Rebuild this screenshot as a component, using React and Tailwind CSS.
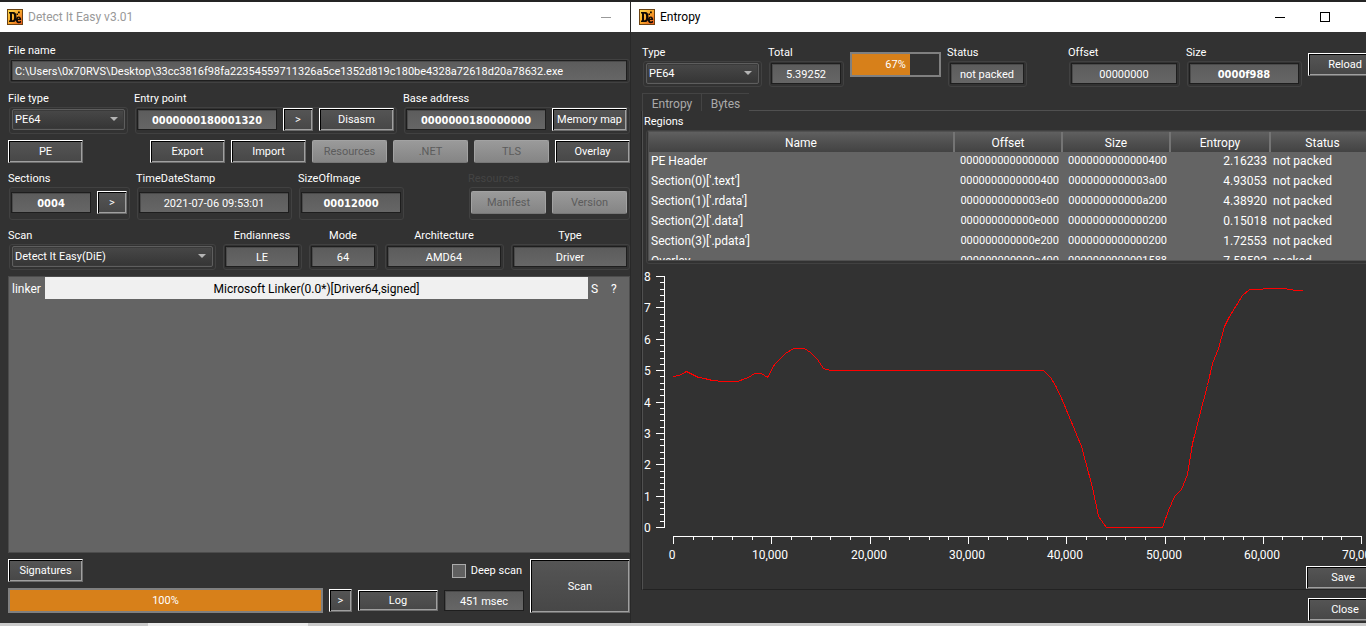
import React from "react";

const cx = (...parts) => parts.filter(Boolean).join(" ");

function Logo() {
  return (
    <svg width="16" height="16" viewBox="0 0 16 16" aria-hidden="true" className="shrink-0">
      <defs>
        <linearGradient id="logo-fill" x1="0" y1="0" x2="1" y2="1">
          <stop offset="0" stopColor="#fbd84a" />
          <stop offset="0.5" stopColor="#f7a72b" />
          <stop offset="1" stopColor="#e8561c" />
        </linearGradient>
      </defs>
      <rect width="16" height="16" fill="#6b4313" />
      <rect x="1" y="1" width="14" height="14" fill="url(#logo-fill)" />
      <path d="M2 3h4.200c2.200 0 3.300 1.700 3.300 5s-1.100 5-3.300 5H2v-1.500h1V4.500H2zM5 4.800v6.400h.8c.9 0 1.300-1 1.300-3.200s-.4-3.200-1.300-3.200z" fill="#100a04" fillRule="evenodd" />
      <path d="M14.200 11H10.900c0 1 .4 1.500 1.200 1.500.6 0 1-.2 1.900-.7v1.700c-.7.500-1.400.7-2.200.7-1.900 0-2.900-1.200-2.900-3.200 0-2.100 1-3.400 2.800-3.400 1.700 0 2.500 1.200 2.500 3.400zm-1.900-1.200c0-.7-.2-1.100-.7-1.100s-.8.400-.8 1.100z" fill="#100a04" />
      <path d="M9.500 4.500H11V6H9.500zM11 2.500h1.800v1.800H11z" fill="#100a04" />
    </svg>
  );
}

function Button({ children, className, disabled }) {
  return (
    <button
      type="button"
      disabled={disabled}
      className={cx(
        "flex shrink-0 items-center justify-center whitespace-nowrap border pt-0.5",
        disabled
          ? "rounded-xs border-[#a2a2a2] border-b-[#777777] bg-linear-to-b from-[#9a9a9a] to-[#858585] text-[#5c5c5c]"
          : "border-t-white border-l-white border-r-[#6c6c6c] border-b-[#6c6c6c] bg-linear-to-b from-[#555555] to-[#474747] text-white shadow-[inset_1px_1px_0_#000,inset_-1px_-1px_0_#a0a0a0]",
        className
      )}
    >
      {children}
    </button>
  );
}

function Value({ id, value, bold, className, label, left }) {
  return (
    <input
      id={id}
      aria-label={label}
      readOnly
      defaultValue={value}
      className={cx(
        "h-[21px] min-w-0 border border-[#1e1e1e] bg-linear-to-b from-[#5c5c5c] to-[#666666] pt-0.5 text-white shadow-[inset_1px_1px_0_#4a4a4a] outline-none",
        left ? "px-[3px]" : "text-center",
        bold && "font-['DejaVu_Sans_Condensed',sans-serif] font-bold",
        className
      )}
    />
  );
}

function Combo({ id, value }) {
  return (
    <div className="relative ml-px h-[21px] flex-1">
      <select
        id={id}
        defaultValue={value}
        className="h-full w-full appearance-none rounded-xs border border-[#5e5e5e] bg-linear-to-b from-[#484848] to-[#353535] pl-[2px] pt-0.5 text-white shadow-[inset_0_0_0_1px_#3a3a3a] outline-none"
      >
        <option>{value}</option>
      </select>
      <svg width="8" height="4" viewBox="0 0 8 4" className="pointer-events-none absolute right-[7px] top-2" aria-hidden="true">
        <path d="M0 0h8L4 4z" fill="#b4b4b4" />
      </svg>
    </div>
  );
}

function Group({ label, htmlFor, className, frame = "h-[26px]", row = "h-[23px]", center, muted, children }) {
  return (
    <div className={cx("flex min-w-0 flex-col gap-0.5", className)}>
      <label
        htmlFor={htmlFor}
        className={cx("h-3.5 whitespace-nowrap leading-4", center && "text-center", muted ? "text-[#444444]" : "text-white")}
      >
        {label}
      </label>
      <div className={cx("ml-px rounded-[3px] border border-[#414141] pl-px pr-0.5", frame)}>
        <div className={cx("flex items-center gap-1.5", row)}>{children}</div>
      </div>
    </div>
  );
}

function Progress({ value, className, fill }) {
  return (
    <div
      role="progressbar"
      aria-valuenow={value}
      aria-label="Progress"
      className={cx("relative flex h-[25px] items-center justify-center border-2 border-[#808080] text-white", className)}
    >
      <div className={cx("absolute inset-y-0 left-0 bg-[#d7801a]", fill)} />
      <span className="relative pt-0.5">{value}%</span>
    </div>
  );
}

function MainWindow() {
  return (
    <section className="flex min-w-0 flex-col border-r border-[#282828]">
      <header className="flex h-[30px] shrink-0 items-center gap-[5px] bg-white pl-[7px] pr-[19px] text-[12px] text-[#999999]">
        <Logo />
        <h1 className="flex-1">Detect It Easy v3.01</h1>
        <button type="button" aria-label="Minimize" className="flex h-6 items-center">
          <span className="block h-px w-2.5 bg-[#999999]" />
        </button>
      </header>
      <main className="flex flex-1 flex-col pb-2.5 pl-2 pt-[11px]">
        <Group label="File name" htmlFor="file-name" frame="h-6" row="h-[21px]">
          <Value id="file-name" left className="flex-1" value="C:\Users\0x70RVS\Desktop\33cc3816f98fa22354559711326a5ce1352d819c180be4328a72618d20a78632.exe" />
        </Group>
        <div className="mt-2 flex gap-1.5">
          <Group label="File type" htmlFor="file-type" className="w-[120px] shrink-0" frame="h-[27px]">
            <Combo id="file-type" value="PE64" />
          </Group>
          <Group label="Entry point" htmlFor="entry-point" className="flex-1" frame="h-[27px]">
            <Value id="entry-point" bold className="flex-1" value="0000000180001320" />
            <Button className="h-[23px] w-[30px]">&gt;</Button>
            <Button className="h-[23px] w-[75px]">Disasm</Button>
          </Group>
          <Group label="Base address" htmlFor="base-address" className="w-[227px] shrink-0" frame="h-[27px]">
            <Value id="base-address" bold className="flex-1" value="0000000180000000" />
            <Button className="h-[23px] w-[75px]">Memory map</Button>
          </Group>
        </div>
        <div className="mt-1.5 flex gap-1.5">
          <Button className="mr-auto h-[23px] w-[75px]">PE</Button>
          <Button className="h-[23px] w-[75px]">Export</Button>
          <Button className="h-[23px] w-[75px]">Import</Button>
          <Button disabled className="h-[23px] w-[75px]">Resources</Button>
          <Button disabled className="h-[23px] w-[75px]">.NET</Button>
          <Button disabled className="h-[23px] w-[75px]">TLS</Button>
          <Button className="h-[23px] w-[75px]">Overlay</Button>
        </div>
        <div className="mt-2 flex gap-1.5">
          <Group label="Sections" htmlFor="sections" className="w-[122px]" frame="h-[33px] pt-[3px]">
            <Value id="sections" bold className="flex-1" value="0004" />
            <Button className="h-[23px] w-[30px]">&gt;</Button>
          </Group>
          <Group label="TimeDateStamp" htmlFor="timestamp" className="w-[156px]" frame="h-[33px] pt-[3px]">
            <Value id="timestamp" className="flex-1" value="2021-07-06 09:53:01" />
          </Group>
          <Group label="SizeOfImage" htmlFor="image-size" className="w-[106px]" frame="h-[33px] pt-[3px]">
            <Value id="image-size" bold className="flex-1" value="00012000" />
          </Group>
          <Group label="Resources" muted className="ml-auto w-[162px]" frame="h-[33px] pt-[3px]">
            <Button disabled className="h-[23px] w-[75px]">Manifest</Button>
            <Button disabled className="h-[23px] w-[75px]">Version</Button>
          </Group>
        </div>
        <div className="mt-2 flex gap-1.5">
          <Group label="Scan" htmlFor="scan-engine" className="flex-1">
            <Combo id="scan-engine" value="Detect It Easy(DiE)" />
          </Group>
          <Group label="Endianness" htmlFor="endianness" center className="w-20">
            <Value id="endianness" className="flex-1" value="LE" />
          </Group>
          <Group label="Mode" htmlFor="mode" center className="w-[70px]">
            <Value id="mode" className="flex-1" value="64" />
          </Group>
          <Group label="Architecture" htmlFor="architecture" center className="w-[120px]">
            <Value id="architecture" className="flex-1" value="AMD64" />
          </Group>
          <Group label="Type" htmlFor="binary-type" center className="w-[120px]">
            <Value id="binary-type" className="flex-1" value="Driver" />
          </Group>
        </div>
        <div className="mt-1.5 flex-1 border border-[#4c4c4c] bg-[#646464]">
          <div className="flex h-[22px] items-stretch text-[12px] leading-6 text-white">
            <span className="w-9 pl-[3px]">linker</span>
            <span className="flex-1 bg-[#f0f0f0] text-center text-black">Microsoft Linker(0.0*)[Driver64,signed]</span>
            <span className="w-5 pl-[3px]">S</span>
            <span className="w-[21px] pl-[3px]">?</span>
          </div>
        </div>
        <div className="mt-1.5 flex gap-1.5">
          <div className="flex flex-1 flex-col gap-1.5">
            <div className="flex items-center justify-between">
              <Button className="h-[23px] w-[75px]">Signatures</Button>
              <label className="flex items-center gap-[5px] pr-0.5 text-white">
                <input type="checkbox" className="h-3.5 w-3.5 appearance-none border border-[#aaaaaa] bg-[#606060]" />
                <span className="pt-0.5">Deep scan</span>
              </label>
            </div>
            <div className="flex items-center gap-1.5">
              <Progress value={100} className="flex-1" fill="w-full" />
              <Button className="h-[23px] w-[23px]">&gt;</Button>
              <Button className="h-[21px] w-20">Log</Button>
              <Value label="Scan time" value="451 msec" className="w-20" />
            </div>
          </div>
          <Button className="w-[100px]">Scan</Button>
        </div>
      </main>
    </section>
  );
}

const regions = [
  ["PE Header", "0000000000000000", "0000000000000400", "2.16233", "not packed"],
  ["Section(0)['.text']", "0000000000000400", "0000000000003a00", "4.93053", "not packed"],
  ["Section(1)['.rdata']", "0000000000003e00", "000000000000a200", "4.38920", "not packed"],
  ["Section(2)['.data']", "000000000000e000", "0000000000000200", "0.15018", "not packed"],
  ["Section(3)['.pdata']", "000000000000e200", "0000000000000200", "1.72553", "not packed"],
  ["Overlay", "000000000000e400", "0000000000001588", "7.58592", "packed"],
];

function RegionTable() {
  return (
    <div className="ml-0.5 mr-[5px] h-[134px] rounded-[3px] border border-[#414141] px-px pb-px">
      <div className="h-[130px] overflow-hidden border border-[#505050] bg-[#646464]">
        <table className="w-full table-fixed border-collapse text-white">
          <colgroup>
            <col />
            <col className="w-[108px]" />
            <col className="w-[108px]" />
            <col className="w-[100px]" />
            <col className="w-[104px]" />
          </colgroup>
          <thead>
            <tr className="h-5 bg-linear-to-b from-[#606060] via-[#505050] to-[#434343]">
              {["Name", "Offset", "Size", "Entropy", "Status"].map((name, i) => (
                <th key={name} className={cx("px-0 pb-0 pt-0.5 text-center text-[12px] font-normal leading-[18px]", i > 0 && "border-l-2 border-[#747474]")}>
                  {name}
                </th>
              ))}
            </tr>
          </thead>
          <tbody>
            {regions.map(([name, offset, size, entropy, status]) => (
              <tr key={name} className="h-5 align-top leading-[18px]">
                <td className="px-0.5 py-0 text-[12px]">{name}</td>
                <td className="px-[3px] py-0 text-right">{offset}</td>
                <td className="px-[3px] py-0 text-right">{size}</td>
                <td className="px-[3px] py-0 text-right text-[12px]">{entropy}</td>
                <td className="px-[3px] py-0 text-[12px]">{status}</td>
              </tr>
            ))}
          </tbody>
        </table>
      </div>
    </div>
  );
}

const curve =
  "29,112 35,111 42,107 54,113 60,114 68,116 78,117 93,117 104,113 110,109 117,109 123,113 130,100 141,89 149,84 160,84 166,88 173,95 179,104 186,106 399,106 406,113 411,121 418,136 437,182 448,223 454,252 462,263 518,263 524,246 530,232 537,225 543,210 548,179 559,136 563,121 568,99 574,84 580,62 585,52 598,31 605,25 612,25 626,24 637,24 647,25 650,26 658,26";

function EntropyChart() {
  const yTicks = Array.from({ length: 41 }, (_, i) => i);
  const xTicks = Array.from({ length: 36 }, (_, i) => i);
  return (
    <svg className="block h-[302px] w-full" role="img" aria-label="Entropy by offset" fill="none">
      <g stroke="#ffffff" shapeRendering="crispEdges">
        <path d="M20.500 12v252M29 272.500h689" />
        {yTicks.map((i) => {
          const y = Math.round(263 - i * 6.275) + 0.5;
          return <line key={i} x1={i % 5 ? 16 : 12} x2="20" y1={y} y2={y} />;
        })}
        {xTicks.map((i) => {
          const x = Math.round(29 + i * 19.66) + 0.5;
          return <line key={i} x1={x} x2={x} y1="272" y2={i % 5 ? 276 : 280} />;
        })}
      </g>
      <polyline points={curve} transform="translate(.5 .5)" stroke="#ff0000" shapeRendering="crispEdges" />
      <g fill="#ffffff" className="text-[12px]">
        {[0, 1, 2, 3, 4, 5, 6, 7, 8].map((n) => (
          <text key={n} x="0" y={Math.round(268 - n * 31.375)}>{n}</text>
        ))}
        {[0, 1, 2, 3, 4, 5, 6, 7].map((n) => (
          <text key={n} x={Math.round(28 + n * 98.3)} y="295" textAnchor="middle">{n ? n + "0,000" : "0"}</text>
        ))}
      </g>
    </svg>
  );
}

function EntropyWindow() {
  return (
    <section className="flex min-w-0 flex-col overflow-hidden">
      <header className="flex h-[30px] shrink-0 items-center bg-white pl-2 pr-9 text-[12px] text-black">
        <Logo />
        <h2 className="ml-[5px] flex-1">Entropy</h2>
        <button type="button" aria-label="Minimize" className="mr-[35px] flex h-6 items-center">
          <span className="block h-px w-2.5 bg-black" />
        </button>
        <button type="button" aria-label="Maximize" className="flex h-6 items-center">
          <span className="block h-2.5 w-2.5 border border-black" />
        </button>
      </header>
      <div className="flex w-[calc(100%+16px)] flex-1 flex-col pl-[11px] pt-[13px]">
        <div className="flex gap-1.5">
          <Group label="Type" htmlFor="entropy-type" className="w-[120px]">
            <Combo id="entropy-type" value="PE64" />
          </Group>
          <Group label="Total" htmlFor="total" className="w-[76px]">
            <Value id="total" className="flex-1" value="5.39252" />
          </Group>
          <Progress value={67} className="mt-[7px] w-[91px]" fill="w-[67%]" />
          <Group label="Status" htmlFor="status" className="mr-auto w-20">
            <Value id="status" className="flex-1" value="not packed" />
          </Group>
          <Group label="Offset" htmlFor="offset" className="w-28">
            <Value id="offset" className="flex-1" value="00000000" />
          </Group>
          <Group label="Size" htmlFor="size" className="w-[116px]">
            <Value id="size" bold className="flex-1" value="0000f988" />
          </Group>
          <Button className="mt-2 h-[23px] w-[74px]">Reload</Button>
        </div>
        <div className="mt-1.5 flex" role="tablist">
          <button type="button" role="tab" aria-selected="true" className="h-[18px] w-[59px] border-l border-t border-[#444444] text-[12px] leading-[20px] text-[#aaaaaa]">Entropy</button>
          <button type="button" role="tab" aria-selected="false" className="h-[18px] w-12 border-l border-t border-[#444444] text-[12px] leading-[20px] text-[#aaaaaa]">Bytes</button>
          <div className="flex-1 border-b border-[#505050]" />
        </div>
        <div className="flex flex-1 flex-col border-b border-l border-b-[#222222] border-l-[#505050] pl-px shadow-[-1px_0_0_#262626]">
          <h3 className="mb-0.5 mt-[3px] h-3.5 leading-4 text-white">Regions</h3>
          <RegionTable />
          <EntropyChart />
          <Button className="mr-0.5 mt-auto h-[23px] w-[74px] self-end">Save</Button>
        </div>
        <Button className="mb-0.5 mt-2 h-[23px] w-[74px] self-end">Close</Button>
      </div>
    </section>
  );
}

export default function App() {
  return (
    <div className="flex min-h-screen flex-col overflow-hidden border-t-2 border-[#242424] bg-[#323232] font-['Roboto','Noto_Sans',sans-serif] text-[11px]">
      <div className="grid flex-1 grid-cols-[631fr_735fr]">
        <MainWindow />
        <EntropyWindow />
      </div>
      <div className="h-[3px] shrink-0 bg-[#cbcbcb] pl-[148px]">
        <div className="h-full w-40 bg-[#ececec]" />
      </div>
    </div>
  );
}
